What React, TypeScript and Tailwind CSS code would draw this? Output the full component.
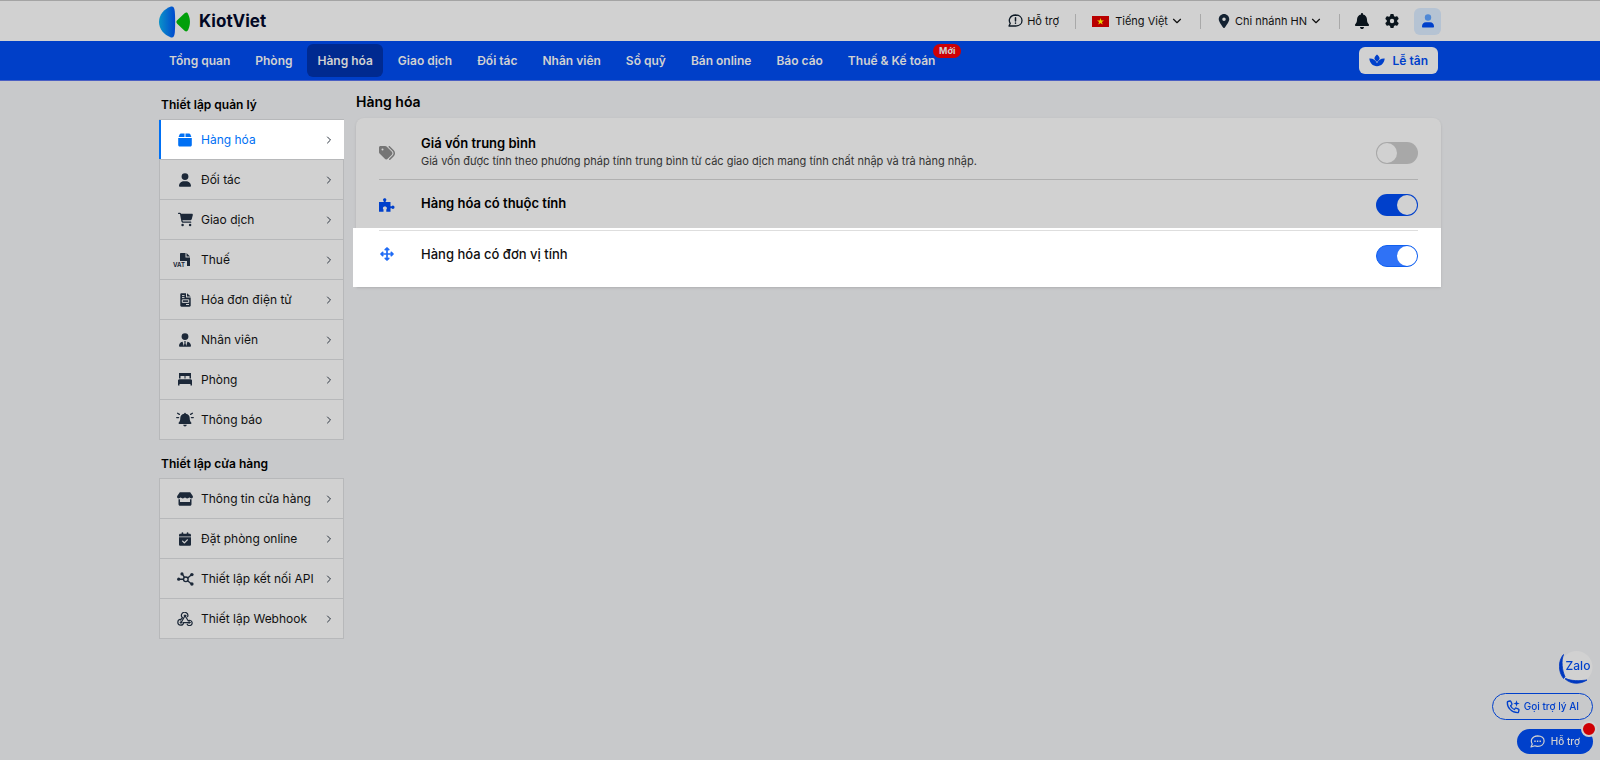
import { ReactNode } from "react";
import { FaBell, FaCalendarCheck, FaCartShopping, FaGear, FaLocationDot, FaTags, FaUser, FaUserTie } from "react-icons/fa6";
import { FiChevronDown, FiChevronRight } from "react-icons/fi";

const navItems = ["Tổng quan", "Phòng", "Hàng hóa", "Giao dịch", "Đối tác", "Nhân viên", "Sổ quỹ", "Bán online", "Báo cáo", "Thuế & Kế toán"];

const Logo = () => (
    <svg width="32" height="34" viewBox="0 -1 32 34" aria-hidden="true">
        <defs>
            <linearGradient id="kvBlue" x1="0" x2="1">
                <stop offset="0" stopColor="#0b93c8" />
                <stop offset="1" stopColor="#0048cf" />
            </linearGradient>
        </defs>
        <path d="M12 1.600C14.300 1 15.500 3 15.800 6.500c.5 6.500.5 14.500 0 21-.3 3.600-1.500 5.500-3.800 4.900C5 30 0 24 0 17S5 4 12 1.600z" fill="url(#kvBlue)" />
        <path d="M18.200 15.300 25.600 8.300c1.300-1.100 2.700-.9 3.500.7 2.500 5 2.500 11 0 16-.8 1.600-2.200 1.800-3.500.7l-7.400-7c-1.100-1.100-1.100-2.300 0-3.400z" fill="#009f0a" />
    </svg>
);

const SupportIcon = () => (
    <svg width="15" height="14" viewBox="0 0 15 14" fill="none" stroke="#0e1a26" strokeWidth="1.300" strokeLinecap="round" strokeLinejoin="round">
        <path d="M2.300 9.300C.2 6.500 1.500 1.200 7.600 1c4 0 6.400 2.500 6.400 5.500s-2.400 5.500-6.400 5.500H1l1.300-2.700z" />
        <path d="M7.500 3.700v3.200M7.500 9v.2" strokeWidth="1.500" />
    </svg>
);

const LotusIcon = () => (
    <svg width="16" height="13" viewBox="0 0 16 13" fill="currentColor">
        <path d="M8 .5c1.600 1.300 2.500 2.500 2.500 3.800C10.500 5.700 9.300 6.900 8 8 6.700 6.900 5.500 5.700 5.500 4.300 5.500 3 6.400 1.800 8 .5z" />
        <path d="M.3 4.600C3.700 4.300 6.700 5.900 8 9.200c1.300-3.300 4.300-4.900 7.700-4.600-.3 4.400-3.400 7.700-7.700 7.700S.6 9 .3 4.600z" />
    </svg>
);

const BoxIcon = () => (
    <svg width="14" height="14" viewBox="0 0 14 14" fill="currentColor">
        <path d="M3 .5h3.500V4H.6L1.700 1.300C1.900.8 2.400.5 3 .5zM7.500.5H11c.6 0 1.100.3 1.300.8L13.400 4H7.500zM.2 5h13.600v7c0 .9-.6 1.500-1.500 1.500H1.700C.8 13.500.2 12.900.2 12z" />
    </svg>
);

const VatIcon = () => (
    <svg width="26" height="16" viewBox="0 0 26 16" fill="currentColor" className="shrink-0">
        <path d="M9 1h4.500v4.500H18V14h-3V9H8V2c0-.6.400-1 1-1zM14.500 1 18 4.500h-3.500z" />
        <text x="1" y="15" fontSize="6" fontWeight="700" fontFamily="Inter, sans-serif">VAT</text>
    </svg>
);

const InvoiceIcon = () => (
    <svg width="11" height="14" viewBox="0 0 11 14">
        <path d="M1.500.3H6V4.500h4.700v8c0 .7-.5 1.200-1.200 1.200h-8c-.7 0-1.200-.5-1.200-1.200v-11C.3.800.8.3 1.500.3zM7 .3l3.700 3.300H7z" fill="currentColor" />
        <path d="M2 2.600h2.500M2 4.600h2.500M2.300 6.800h6.400v2.600H2.300zM6 11.500h3" fill="none" stroke="#d1d1d1" strokeWidth="1" />
    </svg>
);

const BedIcon = () => (
    <svg width="14" height="13" viewBox="0 0 14 13" fill="currentColor">
        <path d="M1 0h12v5.500h-1.500V3h-4v2.500h-1V3h-4v2.500H1zM1.500 6.200h11c.8 0 1.500.6 1.500 1.400V12.500h-1.500V11h-11v1.500H0V7.600C0 6.800.7 6.200 1.500 6.200z" />
    </svg>
);

const AlarmIcon = () => (
    <svg width="18" height="15" viewBox="0 0 18 15" fill="currentColor" className="shrink-0">
        <path d="M9 .8c.5 0 .9.400.9.900 2.400.4 3.800 2 3.800 4.200 0 2.300.600 3.500 1.500 4.500.600.700.100 1.500-.6 1.500H3.400c-.7 0-1.200-.8-.6-1.500.9-1 1.500-2.200 1.500-4.500 0-2.200 1.400-3.800 3.800-4.200 0-.5.400-.9.900-.9zM7.300 12.700h3.400c0 .9-.8 1.700-1.700 1.700s-1.700-.8-1.700-1.700z" />
        <path d="M3.400 2.400 1.600 1.300M2.600 5.600H.7M14.600 2.400l1.800-1.100M15.400 5.600h1.900" stroke="currentColor" strokeWidth="1.300" strokeLinecap="round" />
    </svg>
);

const StoreIcon = () => (
    <svg width="16" height="14" viewBox="0 0 16 14" fill="currentColor">
        <path d="M2.800.3h10.400l2.400 3.400c.8 1.300 0 2.700-1.300 2.700-.9 0-1.600-.5-2-1.100-.4.600-1.200 1.100-2.100 1.100S8.500 5.900 8 5.300c-.5.600-1.300 1.100-2.200 1.100s-1.700-.5-2.100-1.100c-.4.600-1.100 1.100-2 1.100C.4 6.400-.4 5 .4 3.700z" />
        <path d="M1.500 7.300H3V10h10V7.300h1.500v4.900c0 .8-.6 1.500-1.500 1.500H3c-.9 0-1.500-.7-1.500-1.500z" />
    </svg>
);

const ApiIcon = () => (
    <svg width="17" height="14" viewBox="0 0 17 14" fill="none" stroke="currentColor" strokeWidth="1.400">
        <circle cx="8.800" cy="7.300" r="2.300" />
        <path d="M1.800 7.200h4.700M7.500 5.400 5.300 2.200M10.700 6l3.500-3M10.600 8.700l3.600 3" />
        <g fill="currentColor" stroke="none">
            <circle cx="1.700" cy="7.200" r="1.600" />
            <circle cx="5" cy="1.900" r="1.600" />
            <circle cx="14.900" cy="2.600" r="1.700" />
            <circle cx="14.900" cy="12" r="1.700" />
        </g>
    </svg>
);

const WebhookIcon = () => (
    <svg width="16" height="14" viewBox="0 0 16 14" fill="none" stroke="currentColor" strokeLinecap="round">
        <path d="M5.300 5.600a3.200 3.200 0 1 1 5.300-.9M8 3.700l3.200 5.100a2.600 2.600 0 1 1-1 3.400M8 3.700 4.600 9.800M3.600 7.400A2.900 2.900 0 1 0 6.600 10.600h5.200M5.400 5.600 3.600 8" strokeWidth="1.200" />
        <circle cx="8" cy="3.700" r=".8" fill="currentColor" />
        <circle cx="4" cy="10.500" r=".8" fill="currentColor" />
        <circle cx="12.200" cy="10.500" r=".8" fill="currentColor" />
    </svg>
);

const PuzzleIcon = () => (
    <svg width="16" height="14" viewBox="0 0 16 14" fill="currentColor">
        <path d="M0 4h4.700V2.900C4.200 2.600 4 2.100 4 1.700 4 .8 4.800.2 5.700.2s1.700.6 1.700 1.500c0 .5-.3.900-.7 1.200V4h4.800v4.300h1.200c.3-.5.700-.8 1.200-.8.900 0 1.600.8 1.600 1.700s-.7 1.700-1.600 1.700c-.5 0-.9-.3-1.200-.7h-1.200v3.500H7.300v-2.200c.4-.3.6-.7.6-1.200 0-1-.8-1.700-2-1.700s-2 .7-2 1.700c0 .5.200.9.600 1.200v2.200H0z" />
    </svg>
);

const MoveIcon = () => (
    <svg width="14" height="14" viewBox="0 0 14 14" fill="none" stroke="currentColor" strokeWidth="1.700" strokeLinecap="round" strokeLinejoin="round">
        <path d="M7 1.300v11.400M1.300 7h11.400M5.300 2.700 7 1l1.700 1.700M5.300 11.300 7 13l1.700-1.700M2.700 5.300 1 7l1.700 1.700M11.300 5.300 13 7l-1.700 1.700" />
    </svg>
);

const CallIcon = () => (
    <svg width="14" height="14" viewBox="0 0 14 14" fill="none" stroke="currentColor" strokeWidth="1.300" strokeLinejoin="round">
        <path d="M2 1.500 4 1c.4-.1.700.1.900.5l1 2.300c.1.400 0 .7-.2.900L4.500 5.700c.8 1.700 2.100 3 3.800 3.800l1-1.200c.2-.3.600-.4.900-.2l2.300 1c.4.200.6.5.5.9l-.5 2c-.1.400-.4.700-.9.700C6 12.700 1.300 8 1.300 2.400c0-.4.300-.8.700-.9z" />
        <path d="M10.500.200 11.300 2.700 13.800 3.500 11.300 4.300 10.500 6.800 9.700 4.300 7.200 3.500 9.700 2.700z" fill="currentColor" stroke="none" />
    </svg>
);

const ChatIcon = () => (
    <svg width="15" height="13" viewBox="0 0 15 13" fill="none" stroke="currentColor" strokeWidth="1.200" strokeLinejoin="round">
        <path d="M2.300 9C.2 6 1.700 1 7.600.8c4 0 6.500 2.200 6.500 5.200s-2.500 5.300-6.500 5.300c-1 0-1.900-.1-2.700-.5L1 12z" />
        <path d="M4.300 6.200h1.400M6.900 6.200h1.400M9.500 6.200h1.400" strokeWidth="1.500" />
    </svg>
);

const manageItems = [
    { label: "Hàng hóa", icon: <BoxIcon /> },
    { label: "Đối tác", icon: <FaUser className="w-3 h-3.5" /> },
    { label: "Giao dịch", icon: <FaCartShopping className="w-[15px] h-[15px]" /> },
    { label: "Thuế", icon: <VatIcon /> },
    { label: "Hóa đơn điện tử", icon: <InvoiceIcon /> },
    { label: "Nhân viên", icon: <FaUserTie className="w-3 h-3.5" /> },
    { label: "Phòng", icon: <BedIcon /> },
    { label: "Thông báo", icon: <AlarmIcon /> },
];

const storeItems = [
    { label: "Thông tin cửa hàng", icon: <StoreIcon /> },
    { label: "Đặt phòng online", icon: <FaCalendarCheck className="w-3 h-3.5" /> },
    { label: "Thiết lập kết nối API", icon: <ApiIcon /> },
    { label: "Thiết lập Webhook", icon: <WebhookIcon /> },
];

const SideMenu = ({ title, items, active }: { title: string; items: { label: string; icon: ReactNode }[]; active?: string }) => (
    <section>
        <h2 className="px-0.5 pb-1 text-xs leading-5 font-semibold text-black">{title}</h2>
        <ul className="border border-t-0 border-[#b7b8ba] bg-[#d1d1d1]">
            {items.map((item) => (
                <li key={item.label} className="border-t border-[#b7b8ba]">
                    <a
                        href="#"
                        className={item.label === active
                            ? "flex items-center h-[39px] pl-[15px] pr-[9px] -mx-px border-l-2 border-[#0070f4] bg-white text-[#0070f4]"
                            : "flex items-center h-[39px] pl-4 pr-2 text-[#1c2838]"}
                    >
                        <span className="flex justify-center w-[18px]">{item.icon}</span>
                        <span className={item.label === active ? "flex-1 ml-[7px] text-xs" : "flex-1 ml-[7px] text-xs text-[#101010]"}>{item.label}</span>
                        <FiChevronRight className="w-3 h-3 text-[#2b3440]" />
                    </a>
                </li>
            ))}
        </ul>
    </section>
);

const Divider = () => <span className="w-px h-[15px] bg-[#a9a9a9]" />;

const dimSwitch = "appearance-none flex items-center w-[42px] h-[22px] p-px rounded-full bg-[#a8a8a8] checked:bg-[#0040cb] checked:justify-end before:w-5 before:h-5 before:rounded-full before:bg-[#d1d1d1]";
const litSwitch = "appearance-none flex items-center w-[42px] h-[22px] rounded-full border border-[#1060f0] bg-[#2f72f6] justify-end before:w-5 before:h-5 before:rounded-full before:bg-white";

const App = () => {
    return (
        <div className="min-h-screen bg-[#c8c9cb] font-[Inter,sans-serif] text-[#101010]">
            <header className="border-t border-[#a4a4a4] bg-[#d1d1d1]">
                <div className="flex items-center justify-between max-w-[1282px] h-10 mx-auto">
                    <a href="#" className="flex items-center gap-2">
                        <Logo />
                        <span className="pt-0.5 text-[17px] font-bold text-[#020824]">KiotViet</span>
                    </a>
                    <div className="flex items-center text-[11px]">
                        <a href="#" className="flex items-center gap-1 mr-4"><SupportIcon />Hỗ trợ</a>
                        <Divider />
                        <button className="flex items-center mx-4">
                            <svg width="17" height="11" viewBox="0 0 17 11">
                                <path d="M0 0h17v11H0z" fill="#b90000" />
                                <path d="M8.500 2l.85 2.500H12L9.900 6.100l.8 2.500-2.200-1.500-2.200 1.500.8-2.500L5 4.500h2.650z" fill="#e8d400" />
                            </svg>
                            <span className="ml-1.5 mr-0.5">Tiếng Việt</span>
                            <FiChevronDown className="w-3.5 h-3.5" />
                        </button>
                        <Divider />
                        <button className="flex items-center mx-4">
                            <FaLocationDot className="w-3 h-3.5 mx-px text-[#142232]" />
                            <span className="ml-1 mr-0.5">Chi nhánh HN</span>
                            <FiChevronDown className="w-3.5 h-3.5" />
                        </button>
                        <Divider />
                        <button className="ml-[15px]"><FaBell className="w-3.5 h-4 text-[#0a141c]" /></button>
                        <button className="ml-4"><FaGear className="w-3.5 h-3.5 text-[#0a141c]" /></button>
                        <button className="flex items-center justify-center w-[27px] h-[27px] ml-[15px] rounded-md bg-[#b5c3d3]">
                            <svg width="12" height="14" viewBox="0 0 12 14">
                                <circle cx="6" cy="3.500" r="3.200" fill="#4e88d6" />
                                <path d="M0 12.500C0 9.900 1.500 8.200 4 8.200h4c2.500 0 4 1.700 4 4.300 0 .6-.4 1-1 1H1c-.6 0-1-.4-1-1z" fill="#0040cb" />
                            </svg>
                        </button>
                    </div>
                </div>
            </header>

            <nav className="border-b border-[#4a5fc4] bg-[#003fc8]">
                <div className="flex items-center justify-between max-w-[1282px] h-[39px] mx-auto pr-[3px]">
                    <div className="flex items-center gap-[5px]">
                        {navItems.map((item) => (
                            <a
                                key={item}
                                href="#"
                                className={item === "Hàng hóa"
                                    ? "px-2.5 rounded-md bg-[#002a90] text-xs leading-[33px] font-semibold text-[#d1d1d1]"
                                    : "relative px-2.5 text-xs leading-[33px] font-semibold text-[#d1d1d1]"}
                            >
                                {item}
                                {item === "Thuế & Kế toán" && (
                                    <span className="absolute top-0 -right-4 px-1.5 rounded-full bg-[#cf0005] text-[9px] leading-[14px] font-bold">Mới</span>
                                )}
                            </a>
                        ))}
                    </div>
                    <button className="flex items-center gap-2 h-[27px] px-2.5 rounded-md bg-[#d1d1d1] text-xs font-semibold text-[#0040cb]">
                        <LotusIcon />
                        Lễ tân
                    </button>
                </div>
            </nav>

            <div className="flex items-start gap-3 max-w-[1282px] mx-auto">
                <aside className="flex flex-col gap-3.5 w-[185px] pt-3.5">
                    <SideMenu title="Thiết lập quản lý" items={manageItems} active="Hàng hóa" />
                    <SideMenu title="Thiết lập cửa hàng" items={storeItems} />
                </aside>

                <main className="flex-1 pt-[11px]">
                    <h1 className="pb-1.5 text-sm leading-5 font-semibold text-black">Hàng hóa</h1>
                    <div className="rounded-t-lg bg-[#d1d1d1] shadow-sm">
                        <div className="flex items-center h-[61px] mx-[23px] pt-2">
                            <FaTags className="w-4 h-4 text-[#757575]" />
                            <label htmlFor="avgCost" className="flex-1 ml-[26px] pb-0.5">
                                <span className="block text-[13px] leading-[18px] font-semibold text-black">Giá vốn trung bình</span>
                                <span className="block text-[11px] leading-[18px] text-[#333]">Giá vốn được tính theo phương pháp tính trung bình từ các giao dịch mang tính chất nhập và trả hàng nhập.</span>
                            </label>
                            <input type="checkbox" role="switch" id="avgCost" className={dimSwitch} />
                        </div>
                        <div className="flex items-center h-[49px] mx-[23px] pt-0.5 border-t border-[#b0b0b0] text-[#0040cb]">
                            <PuzzleIcon />
                            <label htmlFor="attributes" className="flex-1 ml-[26px] pb-1 text-[13px] leading-5 font-semibold text-black">Hàng hóa có thuộc tính</label>
                            <input type="checkbox" role="switch" id="attributes" defaultChecked className={dimSwitch} />
                        </div>
                        <div className="-ml-[3px] pt-0.5 pl-[3px] bg-white">
                            <div className="flex items-start h-[57px] mx-[23px] pt-3.5 border-t border-[#dedede] text-[#1f6bf5]">
                                <span className="flex justify-center w-4 pt-0.5"><MoveIcon /></span>
                                <label htmlFor="units" className="flex-1 ml-[26px] text-[13px] leading-[18px] font-medium text-[#101010]">Hàng hóa có đơn vị tính</label>
                                <input type="checkbox" role="switch" id="units" defaultChecked className={litSwitch} />
                            </div>
                        </div>
                    </div>
                </main>
            </div>

            <div className="fixed right-[7px] bottom-1.5 flex flex-col items-end gap-[9px] text-[10px] font-medium">
                <button>
                    <svg width="34" height="34" viewBox="0 0 34 34">
                        <circle cx="17.500" cy="17" r="16" fill="#d1d1d1" />
                        <path d="M4.500 4.500C-1 11-1 21.500 4.500 28.500l1.500-1.700C3 20 2 11 4.500 4.500zM6 28.800C12 34.500 21 34.500 28 30 20 31 12 31 7 28.600z" fill="#0038c0" stroke="#0038c0" strokeWidth=".8" />
                        <text x="19" y="20" textAnchor="middle" fontSize="12" fontWeight="500" fontFamily="Inter, sans-serif" fill="#0040cb">Zalo</text>
                    </svg>
                </button>
                <button className="flex items-center gap-1 h-[27px] px-[13px] rounded-full border border-[#0040cb] text-[#0040cb]">
                    <CallIcon />
                    Gọi trợ lý AI
                </button>
                <button className="relative flex items-center gap-1.5 h-[25px] px-[13px] rounded-full bg-[#0040cb] text-[#d1d1d1]">
                    <ChatIcon />
                    Hỗ trợ
                    <span className="absolute -top-2 -right-1 w-4 h-4 rounded-full border-2 border-[#d1d1d1] bg-[#cf0005]" />
                </button>
            </div>
        </div>
    );
};

export default App;
